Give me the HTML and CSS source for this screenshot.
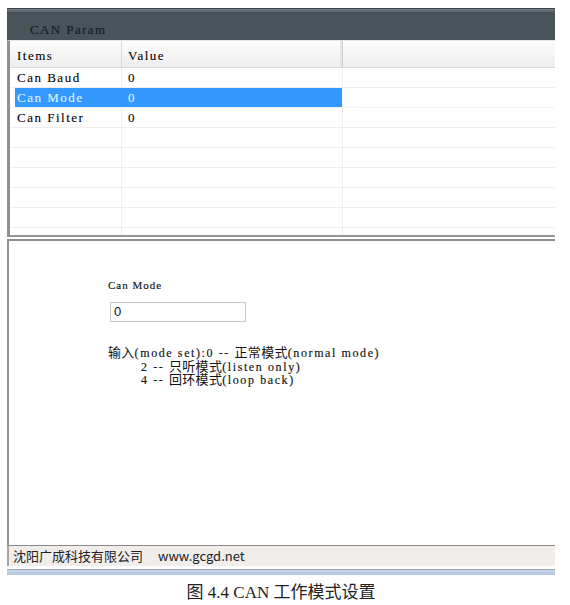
FILE: index.html
```html
<!DOCTYPE html>
<html lang="zh">
<head>
<meta charset="utf-8">
<title>CAN Param</title>
<link rel="stylesheet" href="styles.css">
</head>
<body>
<div class="window">
  <div class="titlebar"><span class="title">CAN Param</span></div>
  <div class="grid-panel">
    <div class="row header">
      <div class="cell c1">Items</div>
      <div class="cell c2">Value</div>
      <div class="cell c3"></div>
    </div>
    <div class="row"><div class="cell c1">Can Baud</div><div class="cell c2">0</div><div class="cell c3"></div></div>
    <div class="row selected"><div class="cell c1">Can Mode</div><div class="cell c2">0</div><div class="cell c3"></div></div>
    <div class="row"><div class="cell c1">Can Filter</div><div class="cell c2">0</div><div class="cell c3"></div></div>
    <div class="row"><div class="cell c1"></div><div class="cell c2"></div><div class="cell c3"></div></div>
    <div class="row"><div class="cell c1"></div><div class="cell c2"></div><div class="cell c3"></div></div>
    <div class="row"><div class="cell c1"></div><div class="cell c2"></div><div class="cell c3"></div></div>
    <div class="row"><div class="cell c1"></div><div class="cell c2"></div><div class="cell c3"></div></div>
    <div class="row"><div class="cell c1"></div><div class="cell c2"></div><div class="cell c3"></div></div>
    <div class="row"><div class="cell c1"></div><div class="cell c2"></div><div class="cell c3"></div></div>
  </div>
  <div class="edit-panel">
    <div class="field-label">Can Mode</div>
    <div class="field-input">0</div>
    <div class="desc">
      <div class="line"><span class="cjk">输入</span>(mode set):0 -- <span class="cjk">正常模式</span>(normal mode)</div>
      <div class="line indent">2 -- <span class="cjk">只听模式</span>(listen only)</div>
      <div class="line indent">4 -- <span class="cjk">回环模式</span>(loop back)</div>
    </div>
  </div>
  <div class="statusbar"><span class="company">沈阳广成科技有限公司</span><span class="site">www.gcgd.net</span></div>
  <div class="frame-bottom"></div>
</div>
<p class="caption">图 4.4 CAN 工作模式设置</p>
</body>
</html>
```
FILE: styles.css
```css
body {
  margin: 0;
  background: #ffffff;
}

.window {
  width: 548px;
  margin: 8px 0 0 7px;
}

.titlebar {
  height: 32px;
  box-sizing: border-box;
  padding: 15px 0 0 23px;
  background: linear-gradient(#3a4146 0 1px, #737c82 1px 2px, #5e686e 2px 4px, #48535a 4px);
  font: 13px/14px "Liberation Serif", serif;
  letter-spacing: 1.4px;
  color: #151c20;
  -webkit-text-stroke: 0.15px #151c20;
}

.grid-panel {
  height: 197px;
  box-sizing: border-box;
  border-left: 3px solid #8f8f8f;
  border-top: 1px solid #dde7ea;
  border-bottom: 2px solid #959595;
  overflow: hidden;
  font: 13px/19px "Liberation Serif", serif;
  letter-spacing: 1.5px;
  color: #000;
  -webkit-text-stroke: 0.1px currentColor;
}

.row {
  display: flex;
  height: 20px;
  box-sizing: border-box;
  border-bottom: 1px solid #eeeeee;
}

.row.header {
  height: 27px;
  align-items: flex-end;
  background: linear-gradient(#fdfdfd, #eeeeee);
  border-bottom: 1px solid #d9d9d9;
}

.cell {
  height: 100%;
  box-sizing: border-box;
  white-space: nowrap;
}

.header .cell {
  padding-bottom: 4px;
  line-height: 15px;
  display: flex;
  align-items: flex-end;
}

.c1 {
  width: 112px;
  padding-left: 7px;
  border-right: 1px solid #f0f0f0;
}

.c2 {
  width: 221px;
  padding-left: 6px;
  border-right: 1px solid #f0f0f0;
}

.c3 {
  flex: 1;
}

.header .c1 {
  border-right: 1px solid #dadada;
}

.header .c2 {
  border-right: 1px solid #d2d2d2;
  box-shadow: -2px 0 0 #e6e6e6 inset;
}

.row.selected {
  border-bottom-color: #f4f4f4;
}

.selected .c1 {
  background: linear-gradient(to right, transparent 5px, #3399ff 5px);
  color: #e4f1ff;
  border-right-color: #3399ff;
}

.selected .c2 {
  background: #3399ff;
  color: #e4f1ff;
}

.edit-panel {
  height: 306px;
  margin-top: 2px;
  box-sizing: border-box;
  border-top: 2px solid #8f8f8f;
  border-left: 2px solid #8f8f8f;
  padding: 37px 0 0 99px;
  color: #111;
}

.field-label {
  font: 11px/14px "Liberation Serif", serif;
  letter-spacing: 1px;
  -webkit-text-stroke: 0.15px #111;
}

.field-input {
  margin: 10px 0 0 2px;
  width: 136px;
  height: 20px;
  box-sizing: border-box;
  border: 1px solid #c9c9c9;
  padding-left: 3px;
  font: 13px/18px "Liberation Sans", sans-serif;
}

.desc {
  margin-top: 23px;
  font: 12px/13.5px "Liberation Serif", serif;
  letter-spacing: 1.6px;
  -webkit-text-stroke: 0.15px #111;
}

.line {
  height: 13.5px;
  white-space: nowrap;
}

.line.indent {
  padding-left: 33px;
}

.desc .cjk {
  font-family: "Noto Sans CJK SC", sans-serif;
  font-size: 13px;
  line-height: 13.5px;
  letter-spacing: 0.3px;
  -webkit-text-stroke: 0;
}

.statusbar {
  height: 21px;
  box-sizing: border-box;
  border-top: 1px solid #8a8a8a;
  border-left: 2px solid #a6a6a6;
  background: #f0edeb;
  padding-left: 4px;
  font: 13px/20px "Noto Sans CJK SC", sans-serif;
  color: #222;
  white-space: nowrap;
}

.site {
  margin-left: 15px;
}

.frame-bottom {
  height: 9px;
  background: linear-gradient(#ffffff 0 3px, #9ea9b5 3px 4px, #c6d5e6 4px 6px, #b9cbe0 6px 9px);
}

.caption {
  margin: 8px 0 0 7px;
  width: 548px;
  text-align: center;
  font: 17px/20px "Liberation Serif", "Noto Sans CJK SC", serif;
  color: #222;
}
```
